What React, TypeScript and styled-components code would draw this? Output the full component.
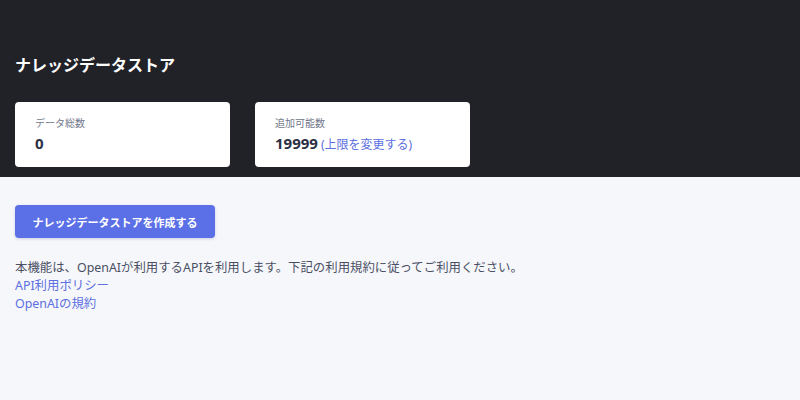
import React from 'react';
import styled, { createGlobalStyle } from 'styled-components';

const GlobalStyle = createGlobalStyle`
  html, body {
    margin: 0;
    padding: 0;
    background-color: #f6f7fb;
    font-family: 'Noto Sans', 'Noto Sans CJK JP', sans-serif;
  }
`;

const Page = styled.div`
  width: 800px;
  min-height: 400px;
  display: flex;
  flex-direction: column;
`;

const Header = styled.header`
  display: flex;
  flex-direction: column;
  gap: 25px;
  height: 177px;
  box-sizing: border-box;
  padding: 53px 15px 0 15px;
  background-color: #212228;
`;

const Title = styled.h1`
  margin: 0;
  font-size: 16px;
  font-weight: 700;
  line-height: 24px;
  color: #ffffff;
`;

const CardRow = styled.div`
  display: flex;
  flex-direction: row;
  gap: 25px;
`;

const StatCard = styled.div`
  display: flex;
  flex-direction: column;
  width: 215px;
  height: 65px;
  box-sizing: border-box;
  padding: 13px 20px 0 20px;
  background-color: #ffffff;
  border-radius: 4px;
`;

const StatLabel = styled.span`
  font-size: 10px;
  line-height: 16px;
  color: #70768a;
`;

const StatValue = styled.div`
  display: flex;
  flex-direction: row;
  align-items: baseline;
  gap: 3px;
  margin-top: 1px;
  font-size: 15px;
  font-weight: 700;
  line-height: 22px;
  color: #2c3045;
`;

const Link = styled.a`
  font-size: 12px;
  font-weight: 400;
  line-height: 18px;
  color: #5c6fe0;
  text-decoration: none;
`;

const Body = styled.main`
  display: flex;
  flex-direction: column;
  align-items: flex-start;
  padding: 28px 15px 0 15px;
`;

const PrimaryButton = styled.button`
  width: 200px;
  height: 33px;
  border: none;
  border-radius: 4px;
  background-color: #5b70e6;
  box-shadow: 0 1px 3px rgba(40, 50, 120, 0.2);
  color: #ffffff;
  font-family: inherit;
  font-size: 11px;
  font-weight: 700;
  cursor: pointer;
`;

const Notice = styled.div`
  display: flex;
  flex-direction: column;
  margin-top: 21px;
  font-size: 12.4px;
  line-height: 18px;
  color: #4a4f63;

  ${Link} {
    font-size: 12.4px;
  }
`;

export default function App() {
  return (
    <Page>
      <GlobalStyle />
      <Header>
        <Title>ナレッジデータストア</Title>
        <CardRow>
          <StatCard>
            <StatLabel>データ総数</StatLabel>
            <StatValue>0</StatValue>
          </StatCard>
          <StatCard>
            <StatLabel>追加可能数</StatLabel>
            <StatValue>
              19999
              <Link href='#'>(上限を変更する)</Link>
            </StatValue>
          </StatCard>
        </CardRow>
      </Header>
      <Body>
        <PrimaryButton>ナレッジデータストアを作成する</PrimaryButton>
        <Notice>
          <span>本機能は、OpenAIが利用するAPIを利用します。下記の利用規約に従ってご利用ください。</span>
          <Link href='#'>API利用ポリシー</Link>
          <Link href='#'>OpenAIの規約</Link>
        </Notice>
      </Body>
    </Page>
  );
}
